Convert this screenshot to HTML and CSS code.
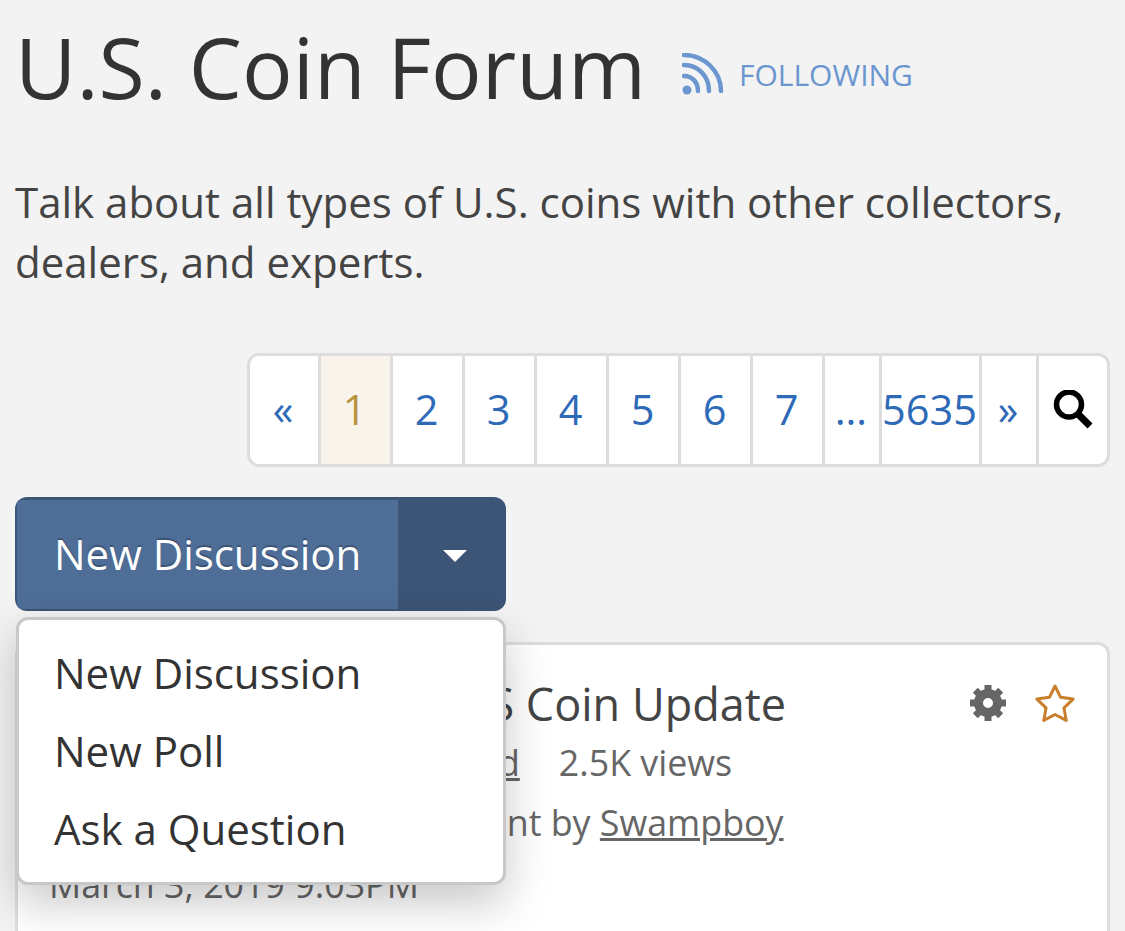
FILE: index.html
```html
<!DOCTYPE html>
<html lang="en">
<head>
    <meta charset="UTF-8">
    <meta name="viewport" content="width=device-width, initial-scale=1.0">
    <title>U.S. Coin Forum</title>
    <link rel="stylesheet" href="styles.css">
</head>
<body>
    <div class="page-head">
        <h1>U.S. Coin Forum</h1>
        <a class="follow" href="#">
            <svg class="rss" viewBox="0 0 42 42" width="42" height="42">
                <circle cx="5" cy="37" r="4.5" fill="#6b96cf"/>
                <path d="M2 23c8 0 14 6 14 15M2 12c14 0 25 11 25 26M2 2c20 0 37 16 37 36" fill="none" stroke="#6b96cf" stroke-width="4.5" stroke-linecap="round"/>
            </svg>
            <span>Following</span>
        </a>
    </div>
    <p class="description">Talk about all types of U.S. coins with other collectors, dealers, and experts.</p>

    <nav class="pager-row">
        <div class="pager">
            <a class="cell prev" href="#">«</a>
            <a class="cell current" href="#">1</a>
            <a class="cell" href="#">2</a>
            <a class="cell" href="#">3</a>
            <a class="cell" href="#">4</a>
            <a class="cell" href="#">5</a>
            <a class="cell" href="#">6</a>
            <a class="cell" href="#">7</a>
            <a class="cell dots" href="#">…</a>
            <a class="cell last" href="#">5635</a>
            <a class="cell next" href="#">»</a>
            <a class="cell search" href="#">
                <svg viewBox="0 0 40 40" width="40" height="40">
                    <circle cx="16" cy="14.5" r="12.5" fill="none" stroke="#000" stroke-width="5.5"/>
                    <path d="M25 24l12 12" fill="none" stroke="#000" stroke-width="7"/>
                </svg>
            </a>
        </div>
    </nav>

    <div class="new-wrap">
        <div class="split-btn">
            <a class="split-main" href="#">New Discussion</a>
            <a class="split-toggle" href="#"><span class="caret"></span></a>
        </div>
        <ul class="menu">
            <li><a href="#">New Discussion</a></li>
            <li><a href="#">New Poll</a></li>
            <li><a href="#">Ask a Question</a></li>
        </ul>
    </div>

    <div class="card">
        <div class="card-body">
            <h2>Monthly February: U.S Coin Update</h2>
            <div class="meta"><a href="#">5 new comments just added</a><span class="views">2.5K views</span></div>
            <div class="meta">Jump to the newest comment by <a href="#">Swampboy</a></div>
            <div class="meta date">March 3, 2019 9:03PM</div>
        </div>
        <div class="card-icons">
            <svg class="gear" viewBox="0 0 36 36" width="36" height="36">
                <circle cx="18" cy="18" r="9.5" fill="none" stroke="#666" stroke-width="9"/>
                <path d="M18 0v7M18 29v7M0 18h7M29 18h7M5.3 5.3l5 5M25.7 25.7l5 5M5.3 30.7l5-5M25.7 10.3l5-5" fill="none" stroke="#666" stroke-width="7"/>
            </svg>
            <svg class="star" viewBox="0 0 40 40" width="40" height="40">
                <path d="M20 2l5.6 11.3 12.5 1.8-9.1 8.8 2.2 12.5L20 30.5 8.8 36.4 11 23.9 1.9 15.1l12.5-1.8z" fill="none" stroke="#c97f2b" stroke-width="3" stroke-linejoin="round"/>
            </svg>
        </div>
    </div>
</body>
</html>
```

FILE: styles.css
```css
* {
    box-sizing: border-box;
    margin: 0;
    padding: 0;
}

html, body {
    height: 931px;
    overflow: hidden;
}

body {
    background: #f3f3f3;
    color: #333;
    font-family: "Open Sans", sans-serif;
    padding: 0 15px;
}

a {
    color: inherit;
    text-decoration: none;
}

.page-head {
    display: flex;
    align-items: center;
    height: 134px;
}

h1 {
    font-size: 84.3px;
    font-weight: 400;
    line-height: 134px;
    color: #333;
}

.follow {
    display: flex;
    align-items: center;
    margin-left: 36px;
    margin-top: 14px;
    color: #6b96cf;
    font-size: 30px;
    text-transform: uppercase;
}

.rss {
    margin-right: 15px;
}

.description {
    margin-top: 38px;
    font-size: 42px;
    line-height: 60px;
    color: #444;
}

.pager-row {
    display: flex;
    justify-content: flex-end;
    margin-top: 61px;
}

.pager {
    display: flex;
    height: 114px;
    background: #fff;
    border: 3px solid #ddd;
    border-radius: 12px;
}

.cell {
    display: flex;
    align-items: center;
    justify-content: center;
    width: 72px;
    padding: 0 2px 2px 0;
    border-right: 3px solid #ddd;
    color: #2f6ab8;
    font-size: 41.5px;
}

.prev {
    width: 71px;
}

.current {
    background: #f8f4ec;
    color: #b8933f;
}

.dots {
    width: 57px;
}

.last {
    width: 100px;
}

.next {
    width: 57px;
}

.search {
    width: 68px;
    padding: 0;
    border-right: 0;
}

.new-wrap {
    position: relative;
    margin-top: 30px;
}

.split-btn {
    display: flex;
    width: 491px;
    height: 114px;
    background: #3c5475;
    border-radius: 12px;
    overflow: hidden;
    padding: 3px 0 2px 2px;
}

.split-main {
    display: flex;
    align-items: center;
    width: 381px;
    padding-left: 37px;
    padding-bottom: 2px;
    background: #4e6d97;
    color: #fff;
    font-size: 42px;
    text-shadow: 0 -2px 0 #3c5475;
}

.split-toggle {
    display: flex;
    flex: 1;
    align-items: center;
    justify-content: center;
}

.caret {
    border-top: 12px solid #fff;
    border-left: 12px solid transparent;
    border-right: 12px solid transparent;
    margin-left: 6px;
    margin-top: 3px;
}

.menu {
    position: absolute;
    top: 120px;
    left: 1px;
    z-index: 2;
    width: 490px;
    height: 268px;
    padding: 14px 0;
    list-style: none;
    background: #fff;
    border: 3px solid #c8c8c8;
    border-radius: 12px;
    box-shadow: 0 18px 45px rgba(0, 0, 0, 0.22);
}

.menu a {
    display: block;
    padding-left: 35px;
    font-size: 42px;
    line-height: 78px;
    color: #333;
}

.card {
    display: flex;
    justify-content: space-between;
    width: 1095px;
    height: 600px;
    margin-top: 31px;
    padding: 31px 32px 0 31px;
    background: #fff;
    border: 3px solid #ddd;
    border-radius: 12px;
}

.card h2 {
    font-size: 45px;
    font-weight: 400;
    line-height: 56px;
    color: #444;
}

.meta {
    font-size: 35.8px;
    line-height: 60px;
    color: #666;
}

.meta a {
    text-decoration: underline;
}

.date {
    margin-top: 2px;
}

.views {
    margin-left: 39px;
}

.card-icons {
    display: flex;
    flex: none;
    gap: 29px;
    margin-top: 8px;
}

.gear {
    margin-top: 1px;
}
```
